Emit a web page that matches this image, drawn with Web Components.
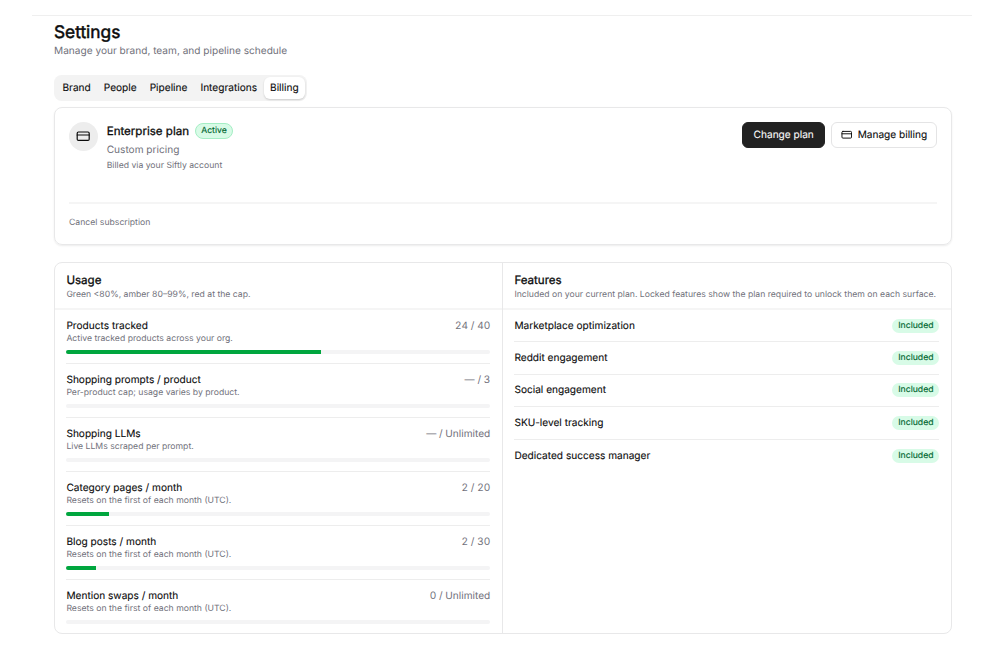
<!DOCTYPE html>
<html lang="en">
<head>
<meta charset="utf-8">
<title>Settings</title>
<style>
    body {
        margin: 0;
        width: 1004px;
        height: 650px;
        overflow: hidden;
        background-color: #fff;
        color: #0a0a0a;
        font-family: Inter, "Liberation Sans", sans-serif;
        font-size: 10.12px;
        text-rendering: geometricPrecision;
        --muted: #71717b;
        --line: #e8e8e9;
        --soft: #f4f4f5;
        --small: 8.67px;
    }
</style>
</head>
<body>
<settings-page heading="Settings" description="Manage your brand, team, and pipeline schedule">
    <tab-bar>
        <tab-item>Brand</tab-item>
        <tab-item>People</tab-item>
        <tab-item>Pipeline</tab-item>
        <tab-item>Integrations</tab-item>
        <tab-item active>Billing</tab-item>
    </tab-bar>
    <plan-card>
        <span slot="name">Enterprise plan</span>
        <status-badge slot="status" outlined>Active</status-badge>
        <span slot="price">Custom pricing</span>
        <span slot="note">Billed via your Siftly account</span>
        <action-button slot="actions" primary>Change plan</action-button>
        <action-button slot="actions"><card-icon></card-icon>Manage billing</action-button>
        <span slot="footer">Cancel subscription</span>
    </plan-card>
    <split-card>
        <info-panel heading="Usage" description="Green &lt;80%, amber 80–99%, red at the cap.">
            <usage-row name="Products tracked" note="Active tracked products across your org." value="24 / 40" percent="60"></usage-row>
            <usage-row name="Shopping prompts / product" note="Per-product cap; usage varies by product." value="— / 3"></usage-row>
            <usage-row name="Shopping LLMs" note="Live LLMs scraped per prompt." value="— / Unlimited"></usage-row>
            <usage-row name="Category pages / month" note="Resets on the first of each month (UTC)." value="2 / 20" percent="10"></usage-row>
            <usage-row name="Blog posts / month" note="Resets on the first of each month (UTC)." value="2 / 30" percent="7"></usage-row>
            <usage-row name="Mention swaps / month" note="Resets on the first of each month (UTC)." value="0 / Unlimited"></usage-row>
        </info-panel>
        <info-panel heading="Features" description="Included on your current plan. Locked features show the plan required to unlock them on each surface.">
            <feature-row>Marketplace optimization</feature-row>
            <feature-row>Reddit engagement</feature-row>
            <feature-row>Social engagement</feature-row>
            <feature-row>SKU-level tracking</feature-row>
            <feature-row>Dedicated success manager</feature-row>
        </info-panel>
    </split-card>
</settings-page>

<script>
class SettingsPage extends HTMLElement {
    constructor() {
        super();
        this.attachShadow({ mode: 'open' });
        this.shadowRoot.innerHTML = `
            <style>
                :host {
                    display: block;
                    margin: 15px 32px 0;
                    border-top: 1px solid #efefef;
                }
                #content {
                    display: flex;
                    flex-direction: column;
                    padding: 5px 20px 0 22px;
                }
                h1 {
                    margin: 0;
                    font-size: 17.32px;
                    font-weight: 400;
                    -webkit-text-stroke: 0.5px;
                    line-height: 23px;
                }
                p {
                    margin: 0 0 17px;
                    color: var(--muted);
                    line-height: 14px;
                }
            </style>
            <div id="content">
                <h1></h1>
                <p></p>
                <slot></slot>
            </div>
        `;
    }

    connectedCallback() {
        this.shadowRoot.querySelector('h1').textContent = this.getAttribute('heading');
        this.shadowRoot.querySelector('p').textContent = this.getAttribute('description');
    }
}

class TabBar extends HTMLElement {
    constructor() {
        super();
        this.attachShadow({ mode: 'open' });
        this.shadowRoot.innerHTML = `
            <style>
                :host {
                    display: flex;
                    align-self: flex-start;
                    box-sizing: border-box;
                    height: 26px;
                    padding: 2px;
                    margin-bottom: 6px;
                    border-radius: 7.5px;
                    background-color: #f3f3f3;
                }
            </style>
            <slot></slot>
        `;
    }
}

class TabItem extends HTMLElement {
    constructor() {
        super();
        this.attachShadow({ mode: 'open' });
        this.shadowRoot.innerHTML = `
            <style>
                :host {
                    display: flex;
                    align-items: center;
                    padding: 0 6.5px;
                    border-radius: 6px;
                    -webkit-text-stroke: 0.1px;
                }
                :host([active]) {
                    background-color: #fff;
                    box-shadow: 0 1px 2px rgba(0, 0, 0, 0.16);
                }
            </style>
            <slot></slot>
        `;
    }
}

class CardIcon extends HTMLElement {
    constructor() {
        super();
        this.attachShadow({ mode: 'open' });
        this.shadowRoot.innerHTML = `
            <style>
                :host {
                    display: block;
                    width: 11.5px;
                    height: 11.5px;
                }
                svg {
                    display: block;
                    width: 100%;
                    height: 100%;
                }
            </style>
            <svg viewBox="0 0 24 24" fill="none" stroke="currentColor" stroke-width="2" stroke-linecap="round" stroke-linejoin="round">
                <rect width="20" height="14" x="2" y="5" rx="2"/>
                <line x1="2" x2="22" y1="10" y2="10"/>
            </svg>
        `;
    }
}

class StatusBadge extends HTMLElement {
    constructor() {
        super();
        this.attachShadow({ mode: 'open' });
        this.shadowRoot.innerHTML = `
            <style>
                :host {
                    display: inline-flex;
                    align-items: center;
                    box-sizing: border-box;
                    height: 14px;
                    padding: 0 5.8px;
                    border-radius: 8px;
                    background-color: #d8fbe7;
                    color: #016630;
                    font-size: var(--small);
                    -webkit-text-stroke: 0.15px;
                }
                :host([outlined]) {
                    height: 16px;
                    padding: 0 5.2px;
                    border: 1px solid #a4eec4;
                }
            </style>
            <slot></slot>
        `;
    }
}

class ActionButton extends HTMLElement {
    constructor() {
        super();
        this.attachShadow({ mode: 'open' });
        this.shadowRoot.innerHTML = `
            <style>
                :host {
                    display: flex;
                    align-items: center;
                    gap: 5.6px;
                    box-sizing: border-box;
                    height: 26px;
                    padding: 0 8.8px 0 8.2px;
                    border: 1px solid #e4e4e5;
                    border-radius: 6px;
                    background-color: #fff;
                    -webkit-text-stroke: 0.1px;
                }
                :host([primary]) {
                    padding: 0 10.5px;
                    border-color: #222;
                    background-color: #222;
                    color: #fafafa;
                }
            </style>
            <slot></slot>
        `;
    }
}

class PlanCard extends HTMLElement {
    constructor() {
        super();
        this.attachShadow({ mode: 'open' });
        this.shadowRoot.innerHTML = `
            <style>
                :host {
                    display: flex;
                    flex-direction: column;
                    box-sizing: border-box;
                    height: 138px;
                    padding: 14px;
                    margin-bottom: 17px;
                    border: 1px solid var(--line);
                    border-radius: 8px;
                    box-shadow: 0 1px 2px rgba(0, 0, 0, 0.08);
                }
                #top {
                    display: flex;
                    height: 80px;
                    border-bottom: 2px solid #f5f5f5;
                }
                #avatar {
                    display: flex;
                    align-items: center;
                    justify-content: center;
                    width: 29px;
                    height: 29px;
                    margin-right: 8.7px;
                    border-radius: 50%;
                    background-color: #ededed;
                }
                #avatar card-icon {
                    width: 14.4px;
                    height: 14.4px;
                }
                #info {
                    flex: 1;
                }
                #title {
                    display: flex;
                    align-items: center;
                    gap: 6px;
                    height: 17px;
                    font-size: 11.55px;
                    -webkit-text-stroke: 0.3px;
                }
                #price {
                    margin-top: 4px;
                    line-height: 14px;
                    color: var(--muted);
                }
                #note {
                    margin-top: 3px;
                    line-height: 13px;
                    font-size: var(--small);
                    color: var(--muted);
                }
                #actions {
                    display: flex;
                    align-items: flex-start;
                    gap: 6px;
                }
                #footer {
                    padding-top: 13px;
                    line-height: 13px;
                    font-size: var(--small);
                    color: var(--muted);
                }
            </style>
            <div id="top">
                <div id="avatar"><card-icon></card-icon></div>
                <div id="info">
                    <div id="title"><slot name="name"></slot><slot name="status"></slot></div>
                    <div id="price"><slot name="price"></slot></div>
                    <div id="note"><slot name="note"></slot></div>
                </div>
                <div id="actions"><slot name="actions"></slot></div>
            </div>
            <div id="footer"><slot name="footer"></slot></div>
        `;
    }
}

class SplitCard extends HTMLElement {
    constructor() {
        super();
        this.attachShadow({ mode: 'open' });
        this.shadowRoot.innerHTML = `
            <style>
                :host {
                    display: grid;
                    grid-template-columns: 1fr 1fr;
                    box-sizing: border-box;
                    height: 372px;
                    border: 1px solid var(--line);
                    border-radius: 8px;
                    overflow: hidden;
                }
                ::slotted(:first-child) {
                    border-right: 1px solid var(--line);
                }
            </style>
            <slot></slot>
        `;
    }
}

class InfoPanel extends HTMLElement {
    constructor() {
        super();
        this.attachShadow({ mode: 'open' });
        this.shadowRoot.innerHTML = `
            <style>
                :host {
                    display: block;
                    min-width: 0;
                }
                #head {
                    box-sizing: border-box;
                    height: 47px;
                    padding: 9px 11.7px 0 11.4px;
                    border-bottom: 2px solid #f5f5f5;
                }
                h2 {
                    margin: 0;
                    font-size: 11.55px;
                    font-weight: 400;
                    -webkit-text-stroke: 0.3px;
                    line-height: 17px;
                }
                p {
                    margin: 0;
                    font-size: var(--small);
                    line-height: 13px;
                    color: var(--muted);
                    white-space: nowrap;
                }
                #rows {
                    padding: 0 11.7px 0 11.4px;
                }
            </style>
            <div id="head">
                <h2></h2>
                <p></p>
            </div>
            <div id="rows"><slot></slot></div>
        `;
    }

    connectedCallback() {
        this.shadowRoot.querySelector('h2').textContent = this.getAttribute('heading');
        this.shadowRoot.querySelector('p').textContent = this.getAttribute('description');
    }
}

class UsageRow extends HTMLElement {
    constructor() {
        super();
        this.attachShadow({ mode: 'open' });
        this.shadowRoot.innerHTML = `
            <style>
                :host {
                    display: block;
                    box-sizing: border-box;
                    height: 54.1px;
                    padding-top: 9px;
                    border-bottom: 1px solid #ededed;
                }
                :host(:last-child) {
                    border-bottom: none;
                }
                #line {
                    display: flex;
                    justify-content: space-between;
                    line-height: 15px;
                }
                #name {
                    -webkit-text-stroke: 0.1px;
                }
                #value {
                    color: var(--muted);
                    font-variant-numeric: tabular-nums;
                }
                #note {
                    font-size: var(--small);
                    line-height: 11px;
                    color: var(--muted);
                }
                #track {
                    height: 4px;
                    margin-top: 5px;
                    border-radius: 2px;
                    background-color: var(--soft);
                    overflow: hidden;
                }
                #fill {
                    width: 0;
                    height: 100%;
                    background-color: #00a63e;
                }
            </style>
            <div id="line"><span id="name"></span><span id="value"></span></div>
            <div id="note"></div>
            <div id="track"><div id="fill"></div></div>
        `;
    }

    connectedCallback() {
        for (const key of ['name', 'value', 'note']) {
            this.shadowRoot.getElementById(key).textContent = this.getAttribute(key);
        }
        this.shadowRoot.getElementById('fill').style.width = (this.getAttribute('percent') || 0) + '%';
    }
}

class FeatureRow extends HTMLElement {
    constructor() {
        super();
        this.attachShadow({ mode: 'open' });
        this.shadowRoot.innerHTML = `
            <style>
                :host {
                    display: flex;
                    align-items: center;
                    justify-content: space-between;
                    box-sizing: border-box;
                    height: 32.4px;
                    border-bottom: 1px solid #ededed;
                    -webkit-text-stroke: 0.1px;
                }
                :host(:last-child) {
                    border-bottom: none;
                }
            </style>
            <slot></slot>
            <status-badge>Included</status-badge>
        `;
    }
}

customElements.define('settings-page', SettingsPage);
customElements.define('tab-bar', TabBar);
customElements.define('tab-item', TabItem);
customElements.define('card-icon', CardIcon);
customElements.define('status-badge', StatusBadge);
customElements.define('action-button', ActionButton);
customElements.define('plan-card', PlanCard);
customElements.define('split-card', SplitCard);
customElements.define('info-panel', InfoPanel);
customElements.define('usage-row', UsageRow);
customElements.define('feature-row', FeatureRow);
</script>
</body>
</html>
